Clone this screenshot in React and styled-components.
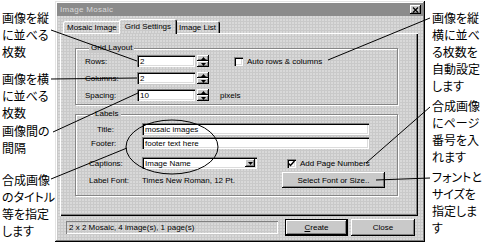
import React from "react";
import styled, { createGlobalStyle } from "styled-components";

const face = "#c9c9c9";
const dither = "radial-gradient(circle at 1px 1px, rgba(255,255,255,0.45) 0.6px, transparent 0.9px)";
const raised = "inset -1px -1px #000, inset 1px 1px #fff, inset -2px -2px #808080";
const sunken = "inset 1px 1px #808080, inset 2px 2px #000, inset -1px -1px #fff, inset -2px -2px #dcdcdc";

const GlobalStyle = createGlobalStyle`
  html, body {
    margin: 0;
    padding: 0;
    background: #fff;
  }
  body {
    font-family: "Liberation Sans", Arial, sans-serif;
  }
`;

const Page = styled.div`
  position: relative;
  display: flex;
  align-items: flex-start;
  width: 484px;
  height: 246px;
  overflow: hidden;
  background: #fff;
`;

const NoteColumn = styled.div`
  flex: 0 0 ${(p) => p.$width}px;
  width: ${(p) => p.$width}px;
  min-width: 0;
  box-sizing: border-box;
  padding-left: ${(p) => p.$inset}px;
  display: flex;
  flex-direction: column;
`;

const Note = styled.div`
  margin-top: ${(p) => p.$gap}px;
  font-family: "Noto Sans CJK JP", sans-serif;
  font-size: 12px;
  line-height: 17px;
  white-space: pre;
  font-feature-settings: "palt";
  color: #000;
`;

const Dialog = styled.div`
  flex: 0 0 370px;
  width: 370px;
  height: 241px;
  margin-top: 1px;
  box-sizing: border-box;
  padding: 2px 2px 6px 2px;
  background-color: ${face};
  background-image: ${dither};
  background-size: 3px 3px;
  box-shadow: inset -1px -1px #000, inset 1px 1px #e4e4e4, inset -2px -2px #808080, inset 2px 2px #fff;
  display: flex;
  flex-direction: column;
  font-size: 8px;
  color: #000;
`;

const TitleBar = styled.div`
  flex: none;
  height: 13px;
  display: flex;
  align-items: center;
  justify-content: space-between;
  padding: 0 2px 0 3px;
  background: #8b8b8b;
  color: #d8d8d8;
  letter-spacing: 0.3px;
`;

const CloseBox = styled.div`
  width: 11px;
  height: 9px;
  background: ${face};
  box-shadow: ${raised};
  display: flex;
  align-items: center;
  justify-content: center;
`;

const Body = styled.div`
  padding: 0 5px 0 3px;
  display: flex;
  flex-direction: column;
`;

const TabStrip = styled.div`
  height: 17px;
  display: flex;
  align-items: flex-end;
  padding-left: 3px;
`;

const Tab = styled.div`
  position: relative;
  z-index: ${(p) => (p.$active ? 2 : 1)};
  height: ${(p) => (p.$active ? 15 : 12)}px;
  margin: 0 ${(p) => (p.$active ? -2 : 0)}px ${(p) => (p.$active ? -1 : 0)}px;
  padding: 0 ${(p) => (p.$active ? 6 : 4)}px;
  display: flex;
  align-items: center;
  background-color: ${face};
  background-image: ${dither};
  background-size: 3px 3px;
  border-radius: 2px 2px 0 0;
  box-shadow: inset 1px 1px #fff, inset -1px 0 #000, inset -2px 0 #808080;
  white-space: nowrap;
`;

const Panel = styled.div`
  height: 183px;
  box-sizing: border-box;
  padding: 10px 20px 0 15px;
  box-shadow: inset 1px 1px #fff, inset -1px -1px #000, inset -2px -2px #808080;
  display: flex;
  flex-direction: column;
`;

const Group = styled.fieldset`
  margin: ${(p) => p.$gap}px 0 0 0;
  padding: ${(p) => p.$pad};
  border: 1px solid #868686;
  box-shadow: inset 1px 1px #fff, 1px 1px #fff;
  min-inline-size: 0;
  display: flex;
  flex-direction: column;
`;

const Legend = styled.legend`
  margin-left: 4px;
  padding: 0 2px;
  line-height: 10px;
  background: ${face};
`;

const Row = styled.div`
  display: flex;
  align-items: center;
  height: ${(p) => p.$h}px;
  margin-top: ${(p) => p.$gap}px;
`;

const FieldLabel = styled.span`
  flex: none;
  width: ${(p) => p.$w}px;
  box-sizing: border-box;
  padding-left: ${(p) => p.$indent || 0}px;
  white-space: nowrap;
`;

const TextBox = styled.div`
  flex: none;
  width: ${(p) => p.$w}px;
  height: 12px;
  box-sizing: border-box;
  padding-left: 3px;
  display: flex;
  align-items: center;
  background: #fff;
  box-shadow: ${sunken};
  white-space: nowrap;
  overflow: hidden;
`;

const Spinner = styled.div`
  flex: none;
  margin-left: 2px;
  width: 12px;
  height: 12px;
  display: flex;
  flex-direction: column;
`;

const SpinHalf = styled.div`
  flex: 1;
  background: ${face};
  box-shadow: ${raised};
  display: flex;
  align-items: center;
  justify-content: center;
`;

const Extra = styled.span`
  margin-left: ${(p) => p.$gap}px;
  display: flex;
  align-items: center;
  white-space: nowrap;
`;

const Check = styled.span`
  flex: none;
  width: 9px;
  height: 9px;
  margin-right: 4px;
  background: #fff;
  box-shadow: ${sunken};
  display: flex;
  align-items: center;
  justify-content: center;
`;

const Select = styled(TextBox)`
  justify-content: space-between;
  padding-right: 2px;
`;

const DropButton = styled.span`
  width: 10px;
  height: 8px;
  background: ${face};
  box-shadow: ${raised};
  display: flex;
  align-items: center;
  justify-content: center;
`;

const Button = styled.div`
  flex: none;
  width: ${(p) => p.$w}px;
  height: ${(p) => p.$h}px;
  margin-left: ${(p) => p.$gap || 0}px;
  background: ${face};
  box-shadow: ${(p) => (p.$default ? `inset 0 0 0 1px #000, inset -2px -2px #000, inset 2px 2px #fff, inset -3px -3px #808080` : raised)};
  display: flex;
  align-items: center;
  justify-content: center;
  white-space: nowrap;
  u {
    text-decoration: underline;
  }
`;

const Footer = styled.div`
  display: flex;
  align-items: center;
  height: 17px;
  margin-top: 3px;
  padding: 0 3px 0 6px;
`;

const Status = styled.div`
  width: 220px;
  height: 13px;
  box-sizing: border-box;
  padding-left: 3px;
  display: flex;
  align-items: center;
  box-shadow: inset 1px 1px #808080, inset -1px -1px #fff;
  white-space: nowrap;
`;

const Leaders = styled.svg`
  position: absolute;
  left: 0;
  top: 0;
  pointer-events: none;
`;

function Arrow({ down }) {
  return (
    <svg width="5" height="3" viewBox="0 0 5 3">
      <path d={down ? "M0 0H5L2.5 3Z" : "M0 3H5L2.5 0Z"} fill="#000" />
    </svg>
  );
}

function Spin() {
  return (
    <Spinner>
      <SpinHalf>
        <Arrow />
      </SpinHalf>
      <SpinHalf>
        <Arrow down />
      </SpinHalf>
    </Spinner>
  );
}

function CheckBox({ checked }) {
  return (
    <Check>
      {checked && (
        <svg width="7" height="7" viewBox="0 0 7 7">
          <path d="M0.5 3.5L2.5 5.5L6.5 1" stroke="#000" strokeWidth="1.5" fill="none" />
        </svg>
      )}
    </Check>
  );
}

const leftNotes = [
  { gap: 9, text: "画像を縦\nに並べる\n枚数" },
  { gap: 10, text: "画像を横\nに並べる\n枚数" },
  { gap: 1, text: "画像間の\n間隔" },
  { gap: 15, text: "合成画像\nのタイトル\n等を指定\nします" },
];

const rightNotes = [
  { gap: 9, text: "画像を縦\n横に並べ\nる枚数を\n自動設定\nします" },
  { gap: 3, text: "合成画像\nにページ\n番号を入\nれます" },
  { gap: 3, text: "フォントと\nサイズを\n指定しま\nす" },
];

const lines = [
  [51, 30, 137, 61],
  [51, 79, 137, 78],
  [53, 132, 138, 93],
  [51, 179, 127, 148],
  [328, 60, 430, 18],
  [366, 163, 430, 107],
  [376, 180, 430, 178],
];

export default function App() {
  return (
    <Page>
      <GlobalStyle />
      <NoteColumn $width={55} $inset={2}>
        {leftNotes.map((n, i) => (
          <Note key={i} $gap={n.gap}>{n.text}</Note>
        ))}
      </NoteColumn>

      <Dialog>
        <TitleBar>
          <span>Image Mosaic</span>
          <CloseBox>
            <svg width="7" height="6" viewBox="0 0 7 6">
              <path d="M1 0.5L6 5.5M6 0.5L1 5.5" stroke="#000" strokeWidth="1.3" />
            </svg>
          </CloseBox>
        </TitleBar>
        <Body>
          <TabStrip>
            <Tab>Mosaic Image</Tab>
            <Tab $active>Grid Settings</Tab>
            <Tab>Image List</Tab>
          </TabStrip>
          <Panel>
            <Group $gap={0} $pad="2px 0 3px 9px">
              <Legend>Grid Layout</Legend>
              <Row $h={12} $gap={0}>
                <FieldLabel $w={52}>Rows:</FieldLabel>
                <TextBox $w={58}>2</TextBox>
                <Spin />
                <Extra $gap={25}>
                  <CheckBox />
                  Auto rows &amp; columns
                </Extra>
              </Row>
              <Row $h={12} $gap={5}>
                <FieldLabel $w={52}>Columns:</FieldLabel>
                <TextBox $w={58}>2</TextBox>
                <Spin />
              </Row>
              <Row $h={12} $gap={5}>
                <FieldLabel $w={52}>Spacing:</FieldLabel>
                <TextBox $w={58}>10</TextBox>
                <Spin />
                <Extra $gap={11}>pixels</Extra>
              </Row>
            </Group>

            <Group $gap={4} $pad="4px 0 7px 13px">
              <Legend>Labels</Legend>
              <Row $h={12} $gap={0}>
                <FieldLabel $w={53} $indent={8}>Title:</FieldLabel>
                <TextBox $w={227}>mosaic images</TextBox>
              </Row>
              <Row $h={12} $gap={2}>
                <FieldLabel $w={53} $indent={2}>Footer:</FieldLabel>
                <TextBox $w={227}>footer text here</TextBox>
              </Row>
              <Row $h={12} $gap={8}>
                <FieldLabel $w={53}>Captions:</FieldLabel>
                <Select $w={115}>
                  Image Name
                  <DropButton>
                    <Arrow down />
                  </DropButton>
                </Select>
                <Extra $gap={30}>
                  <CheckBox checked />
                  Add Page Numbers
                </Extra>
              </Row>
              <Row $h={16} $gap={3}>
                <FieldLabel $w={53}>Label Font:</FieldLabel>
                <FieldLabel $w={140}>Times New Roman, 12 Pt.</FieldLabel>
                <Button $w={103} $h={16}>Select Font or Size..</Button>
              </Row>
            </Group>
          </Panel>
          <Footer>
            <Status>2 x 2 Mosaic, 4 image(s), 1 page(s)</Status>
            <Button $w={63} $h={17} $gap={7} $default>
              <span><u>C</u>reate</span>
            </Button>
            <Button $w={64} $h={17} $gap={3}>Close</Button>
          </Footer>
        </Body>
      </Dialog>

      <NoteColumn $width={59} $inset={7}>
        {rightNotes.map((n, i) => (
          <Note key={i} $gap={n.gap}>{n.text}</Note>
        ))}
      </NoteColumn>

      <Leaders width="484" height="246" viewBox="0 0 484 246">
        {lines.map(([x1, y1, x2, y2], i) => (
          <line key={i} x1={x1} y1={y1} x2={x2} y2={y2} stroke="#000" strokeWidth="1" />
        ))}
        <ellipse cx="172" cy="147" rx="46" ry="27" fill="none" stroke="#000" strokeWidth="1" />
      </Leaders>
    </Page>
  );
}
